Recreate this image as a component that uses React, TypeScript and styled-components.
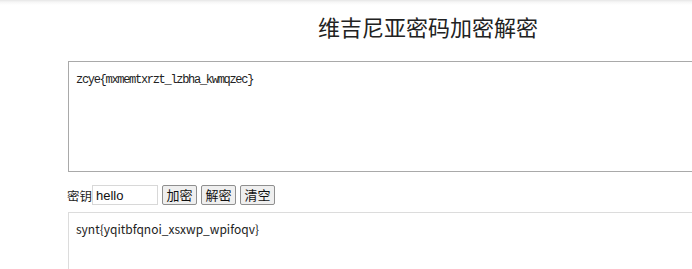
import React from "react";
import styled, { createGlobalStyle } from "styled-components";

const Global = createGlobalStyle`
  html, body { margin: 0; padding: 0; }
  body {
    background: linear-gradient(#e6e6e6 0px, #f6f6f6 2px, #ffffff 5px) no-repeat;
    background-color: #fff;
    font-family: "Noto Sans CJK SC", "Noto Sans", sans-serif;
    overflow: hidden;
  }
`;

const Page = styled.div`
  width: 692px;
  height: 269px;
  overflow: hidden;
  display: flex;
  flex-direction: column;
`;

const Title = styled.h1`
  margin: 11px 0 0 318px;
  font-size: 22px;
  line-height: 31px;
  font-weight: 400;
  color: #222;
  white-space: nowrap;
  font-family: "Noto Sans CJK SC", sans-serif;
`;

const Main = styled.div`
  padding-left: 68px;
  display: flex;
  flex-direction: column;
`;

const Area = styled.textarea<{ $mono?: boolean; $top: number; $h: number; $line: string }>`
  box-sizing: border-box;
  display: block;
  width: 660px;
  height: ${(p) => p.$h}px;
  margin-top: ${(p) => p.$top}px;
  padding: ${(p) => (p.$mono ? "11px 7px" : "7px 7px")};
  border: 1px solid ${(p) => p.$line};
  border-right: none;
  outline: none;
  resize: none;
  background: #fff;
  color: #222;
  font-family: ${(p) =>
    p.$mono ? '"Liberation Mono", monospace' : '"Noto Sans CJK SC", "Noto Sans", sans-serif'};
  font-size: ${(p) => (p.$mono ? "12px" : "12px")};
  letter-spacing: ${(p) => (p.$mono ? "-1.3px" : "0")};
  line-height: ${(p) => (p.$mono ? "14px" : "18px")};
  overflow: hidden;
`;

const KeyRow = styled.div`
  display: flex;
  align-items: center;
  margin-top: 13px;
  margin-left: -1px;
  height: 20px;
`;

const Label = styled.span`
  font-size: 12.5px;
  color: #222;
  white-space: nowrap;
`;

const KeyInput = styled.input`
  box-sizing: border-box;
  width: 66px;
  height: 20px;
  margin: 0 4px 0 0;
  padding: 0 3px;
  border: 1px solid #d8d8d8;
  font-family: "Liberation Sans", Arial, sans-serif;
  font-size: 13px;
  color: #111;
  outline: none;
`;

const Btn = styled.button`
  box-sizing: border-box;
  height: 20px;
  width: 35px;
  margin-right: 4px;
  padding: 0;
  border: 1px solid #8f8f8f;
  border-radius: 2px;
  background: #efefef;
  font-family: "Noto Sans CJK SC", sans-serif;
  font-size: 13px;
  line-height: 18px;
  color: #111;
`;

export default function App() {
  return (
    <>
      <Global />
      <Page>
        <Title>维吉尼亚密码加密解密</Title>
        <Main>
          <Area $mono $top={19} $h={111} $line="#a9a9a9" readOnly value="zcye{mxmemtxrzt_lzbha_kwmqzec}" />
          <KeyRow>
            <Label>密钥</Label>
            <KeyInput readOnly value="hello" />
            <Btn>加密</Btn>
            <Btn>解密</Btn>
            <Btn>清空</Btn>
          </KeyRow>
          <Area $top={7} $h={80} $line="#dcdcdc" readOnly value="synt{yqitbfqnoi_xsxwp_wpifoqv}" />
        </Main>
      </Page>
    </>
  );
}
